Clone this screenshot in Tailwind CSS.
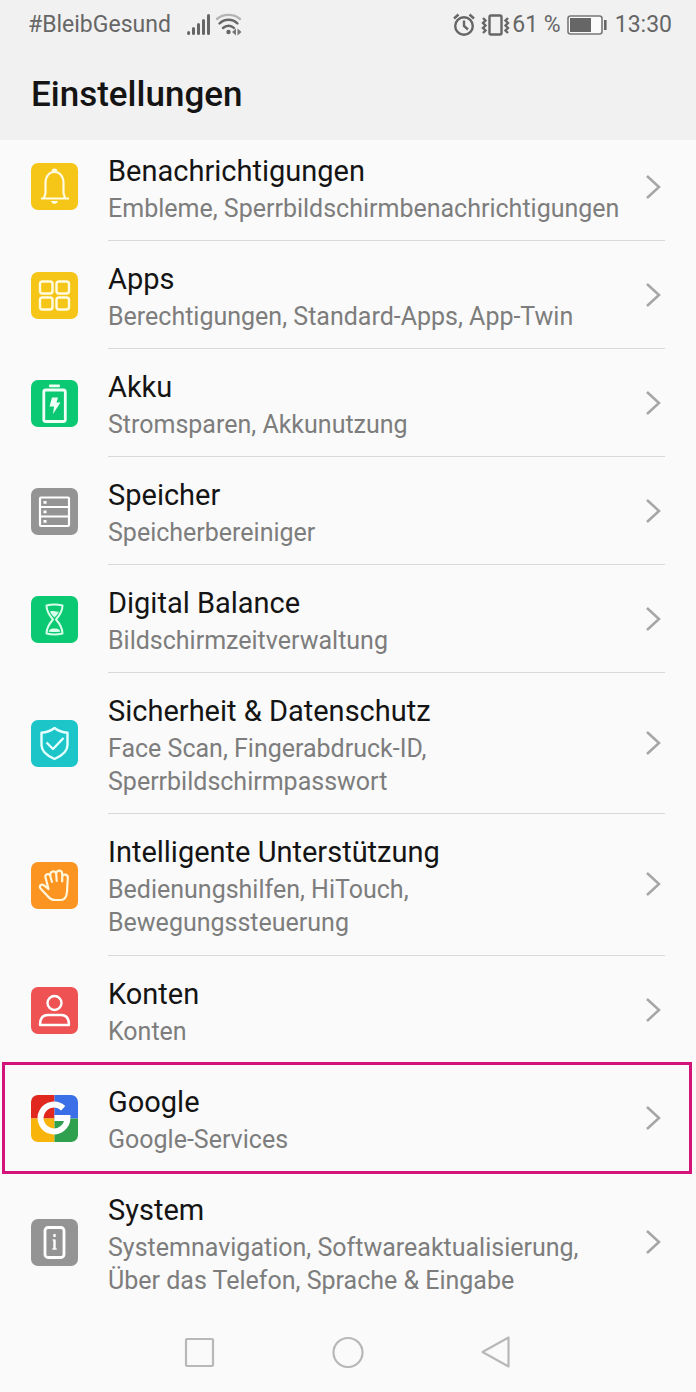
<!DOCTYPE html>
<html lang="de">
  <head>
    <meta charset="UTF-8" />
    <meta name="viewport" content="width=device-width, initial-scale=1.0" />
    <title>Einstellungen</title>
    <script src="https://cdn.jsdelivr.net/npm/@tailwindcss/browser@4"></script>
  </head>
  <body class="flex min-h-screen flex-col bg-[#fafafa] font-['Roboto',sans-serif] text-[#141414]">

    <!-- Status bar + title -->
    <header class="h-[140px] bg-[#f1f1f1]">
      <div class="flex h-[50px] items-center justify-between pr-6 pl-7 text-[23px] text-[#666]">
        <div class="flex items-center">
          <span>#BleibGesund</span>
          <svg class="ml-4 h-6 w-6" viewBox="0 0 24 24" stroke="#666" stroke-width="3" stroke-linecap="round" aria-label="Signal">
            <path d="M1.600 20.500v-1M6.500 20.500v-5M11.500 20.500v-9M16.500 20.500v-13M21.500 20.500v-18" />
          </svg>
          <svg class="ml-1 h-6 w-7" viewBox="0 0 28 24" fill="none" stroke="#666" stroke-width="2.400" stroke-linecap="round" aria-label="WLAN">
            <path d="M2 6c6-5.500 17-5.500 23 0" stroke="#b4b4b4" />
            <path d="M4.500 10.500c5-5 13-5 18 0M8 15c3.300-3 8-3 11 0" />
            <circle cx="13.500" cy="19" r="2.200" fill="#666" stroke="none" />
            <path d="M21 15.500v7l-4-3.500zM22.500 15.500v7l4-3.500z" fill="#777" stroke="none" />
          </svg>
        </div>
        <div class="flex items-center">
          <svg class="h-6 w-6" viewBox="0 0 24 24" fill="none" stroke="#666" stroke-width="2.400" aria-label="Wecker">
            <circle cx="12" cy="13" r="8.800" />
            <path d="M12 7.500V13l4 3.500M2 5.500l4.500-4M22 5.500l-4.500-4" />
          </svg>
          <svg class="ml-1 h-6 w-8" viewBox="0 0 32 24" fill="none" stroke="#666" stroke-width="2.400" aria-label="Vibration">
            <rect x="9.500" y="2.500" width="12" height="19" rx="1.500" />
            <path d="M3 5l2.500 2.500L3 10l2.500 2.500L3 15l2.500 2.500L3 20M28 5l-2.500 2.500L28 10l-2.500 2.500L28 15l-2.500 2.500L28 20" />
          </svg>
          <span>61 %</span>
          <svg class="ml-1.5 h-6 w-10" viewBox="0 0 40 24" aria-label="Akku">
            <rect x="1" y="3" width="34" height="18" rx="2.500" fill="#fafafa" stroke="#777" stroke-width="1.600" />
            <rect x="3" y="5" width="21" height="14" fill="#666" />
            <rect x="37" y="7" width="2.600" height="10" fill="#666" />
          </svg>
          <span class="ml-2">13:30</span>
        </div>
      </div>
      <h1 class="pt-[23px] pl-[31px] text-[35px] leading-[44px] font-medium">Einstellungen</h1>
    </header>

    <!-- Settings list -->
    <main class="flex-1">
      <ul>
        <li>
          <a href="#benachrichtigungen" class="flex items-start pl-[31px]">
            <svg class="mt-[23px] h-[47px] w-[47px] shrink-0" viewBox="0 0 47 47" fill="none" stroke="#fffbe0" stroke-width="2.200">
              <rect width="47" height="47" rx="7" fill="#f5c518" stroke="none" />
              <path d="M10 35.500h28M13 35l1.500-5V20c0-7 4-11 9-11s9 4 9 11v10l1.500 5" />
              <path d="M20.500 8.500a3 3 0 0 1 6 0zM20 38h7c-.5 2-2 2.800-3.500 2.800S20.500 40 20 38z" fill="#fffbe0" stroke="none" />
            </svg>
            <span class="mr-[31px] ml-[30px] flex flex-1 items-center justify-between border-b border-[#d9d9d9] pt-3 pb-[15px]">
              <span>
                <span class="block text-[29px] leading-[38px]">Benachrichtigungen</span>
                <span class="mt-0.5 block text-[25px] leading-[33px] text-[#7d7d7d]">Embleme, Sperrbildschirmbenachrichtigungen</span>
              </span>
              <svg class="mr-1 mb-1 h-6 w-4 shrink-0" viewBox="0 0 16 24" fill="none" stroke="#a6a6a6" stroke-width="2.500"><path d="M2 1l12 11L2 23" /></svg>
            </span>
          </a>
        </li>
        <li>
          <a href="#apps" class="flex items-center pl-[31px]">
            <svg class="h-[47px] w-[47px] shrink-0" viewBox="0 0 47 47" fill="none" stroke="#fffbe0" stroke-width="2.400">
              <rect width="47" height="47" rx="7" fill="#f5c518" stroke="none" />
              <rect x="9" y="9.500" width="12.500" height="12" rx="2.500" />
              <rect x="25.500" y="9.500" width="12.500" height="12" rx="2.500" />
              <rect x="9" y="25.500" width="12.500" height="12" rx="2.500" />
              <rect x="25.500" y="25.500" width="12.500" height="12" rx="2.500" />
            </svg>
            <span class="mr-[31px] ml-[30px] flex flex-1 items-center justify-between border-b border-[#d9d9d9] pt-[19px] pb-[15px]">
              <span>
                <span class="block text-[29px] leading-[38px]">Apps</span>
                <span class="mt-0.5 block text-[25px] leading-[33px] text-[#7d7d7d]">Berechtigungen, Standard-Apps, App-Twin</span>
              </span>
              <svg class="mr-1 mb-1 h-6 w-4 shrink-0" viewBox="0 0 16 24" fill="none" stroke="#a6a6a6" stroke-width="2.500"><path d="M2 1l12 11L2 23" /></svg>
            </span>
          </a>
        </li>
        <li>
          <a href="#akku" class="flex items-center pl-[31px]">
            <svg class="h-[47px] w-[47px] shrink-0" viewBox="0 0 47 47" fill="none" stroke="#f0fff6" stroke-width="2.800">
              <rect width="47" height="47" rx="7" fill="#0bc872" stroke="none" />
              <rect x="18" y="4.500" width="11" height="2.800" rx="1" fill="#f0fff6" stroke="none" />
              <rect x="12.800" y="10" width="21.500" height="31.500" rx="2" />
              <path d="M21 17.500h6l-1.500 5h4L22 34l1-7.500h-4.500z" fill="#f0fff6" stroke="none" />
            </svg>
            <span class="mr-[31px] ml-[30px] flex flex-1 items-center justify-between border-b border-[#d9d9d9] pt-[19px] pb-[15px]">
              <span>
                <span class="block text-[29px] leading-[38px]">Akku</span>
                <span class="mt-0.5 block text-[25px] leading-[33px] text-[#7d7d7d]">Stromsparen, Akkunutzung</span>
              </span>
              <svg class="mr-1 mb-1 h-6 w-4 shrink-0" viewBox="0 0 16 24" fill="none" stroke="#a6a6a6" stroke-width="2.500"><path d="M2 1l12 11L2 23" /></svg>
            </span>
          </a>
        </li>
        <li>
          <a href="#speicher" class="flex items-center pl-[31px]">
            <svg class="h-[47px] w-[47px] shrink-0" viewBox="0 0 47 47" fill="none" stroke="#fff" stroke-width="2.200">
              <rect width="47" height="47" rx="7" fill="#949494" stroke="none" />
              <rect x="9" y="9.500" width="29" height="28.500" rx="1" />
              <path d="M9 19h29M9 28.500h29" />
              <path d="M12.500 14.300h3M12.500 23.800h3M12.500 33.300h3" stroke-width="2.800" />
            </svg>
            <span class="mr-[31px] ml-[30px] flex flex-1 items-center justify-between border-b border-[#d9d9d9] pt-[19px] pb-[15px]">
              <span>
                <span class="block text-[29px] leading-[38px]">Speicher</span>
                <span class="mt-0.5 block text-[25px] leading-[33px] text-[#7d7d7d]">Speicherbereiniger</span>
              </span>
              <svg class="mr-1 mb-1 h-6 w-4 shrink-0" viewBox="0 0 16 24" fill="none" stroke="#a6a6a6" stroke-width="2.500"><path d="M2 1l12 11L2 23" /></svg>
            </span>
          </a>
        </li>
        <li>
          <a href="#digital-balance" class="flex items-center pl-[31px]">
            <svg class="h-[47px] w-[47px] shrink-0" viewBox="0 0 47 47" fill="none" stroke="#d8ffea" stroke-width="2">
              <rect width="47" height="47" rx="7" fill="#0bc872" stroke="none" />
              <path d="M15.500 9.500c5-1.300 11-1.300 16 0 0 6-3 10-6.500 14 3.500 4 6.500 8 6.500 14-5 1.300-11 1.300-16 0 0-6 3-10 6.500-14-3.500-4-6.500-8-6.500-14z" stroke-linejoin="round" />
              <path d="M19 15.500c3-1.500 6 1 9 0-1 2.500-3 4.500-4.500 6-1.500-1.500-3.500-3.500-4.500-6zM17.500 35.500c1-2.500 3.500-3 6-3s5 .5 6 3c-4 .8-8 .8-12 0z" fill="#d8ffea" stroke="none" />
            </svg>
            <span class="mr-[31px] ml-[30px] flex flex-1 items-center justify-between border-b border-[#d9d9d9] pt-[19px] pb-[15px]">
              <span>
                <span class="block text-[29px] leading-[38px]">Digital Balance</span>
                <span class="mt-0.5 block text-[25px] leading-[33px] text-[#7d7d7d]">Bildschirmzeitverwaltung</span>
              </span>
              <svg class="mr-1 mb-1 h-6 w-4 shrink-0" viewBox="0 0 16 24" fill="none" stroke="#a6a6a6" stroke-width="2.500"><path d="M2 1l12 11L2 23" /></svg>
            </span>
          </a>
        </li>
        <li>
          <a href="#sicherheit" class="flex items-center pl-[31px]">
            <svg class="h-[47px] w-[47px] shrink-0" viewBox="0 0 47 47" fill="none" stroke="#e6ffff" stroke-width="2.400" stroke-linejoin="round">
              <rect width="47" height="47" rx="7" fill="#1bc5c8" stroke="none" />
              <path d="M23.500 8c4 3 8 4.300 13 4.700V25c0 6-5 10.500-13 14-8-3.500-13-8-13-14V12.700C15.500 12.300 19.500 11 23.500 8z" />
              <path d="M15.500 22.500l6.500 6.500 10.500-11" />
            </svg>
            <span class="mr-[31px] ml-[30px] flex flex-1 items-center justify-between border-b border-[#d9d9d9] pt-[19px] pb-[15px]">
              <span>
                <span class="block text-[29px] leading-[38px]">Sicherheit &amp; Datenschutz</span>
                <span class="mt-0.5 block text-[25px] leading-[33px] text-[#7d7d7d]">Face Scan, Fingerabdruck-ID,<br />Sperrbildschirmpasswort</span>
              </span>
              <svg class="mr-1 mb-1 h-6 w-4 shrink-0" viewBox="0 0 16 24" fill="none" stroke="#a6a6a6" stroke-width="2.500"><path d="M2 1l12 11L2 23" /></svg>
            </span>
          </a>
        </li>
        <li>
          <a href="#unterstuetzung" class="flex items-center pl-[31px]">
            <svg class="h-[47px] w-[47px] shrink-0" viewBox="0 0 47 47" fill="none" stroke="#fff6dc" stroke-width="2.200" stroke-linecap="round" stroke-linejoin="round">
              <rect width="47" height="47" rx="7" fill="#fb9421" stroke="none" />
              <path d="M17.500 27L14.500 15.500c-1-3.500 3.500-4.500 4.800-1.500l1.700 6M19.400 14c-1-5 5-6.500 5.800-2l.5 7M25.200 12c0-4.500 6-4.400 6 0v7.500M31.200 15c.6-3.600 6-3 5.600 1L36 30c-.5 5-3 8-6 8h-6c-3 0-5-1-7-3.500L9.500 26.500c-1.800-2.800 1-5 3.500-3.200l4.500 3.700" />
            </svg>
            <span class="mr-[31px] ml-[30px] flex flex-1 items-center justify-between border-b border-[#d9d9d9] pt-[19px] pb-4">
              <span>
                <span class="block text-[29px] leading-[38px]">Intelligente Unterstützung</span>
                <span class="mt-0.5 block text-[25px] leading-[33px] text-[#7d7d7d]">Bedienungshilfen, HiTouch,<br />Bewegungssteuerung</span>
              </span>
              <svg class="mr-1 mb-1 h-6 w-4 shrink-0" viewBox="0 0 16 24" fill="none" stroke="#a6a6a6" stroke-width="2.500"><path d="M2 1l12 11L2 23" /></svg>
            </span>
          </a>
        </li>
        <li>
          <a href="#konten" class="flex items-center pl-[31px]">
            <svg class="h-[47px] w-[47px] shrink-0" viewBox="0 0 47 47" fill="none" stroke="#fff" stroke-width="2.400" stroke-linejoin="round">
              <rect width="47" height="47" rx="7" fill="#ee5253" stroke="none" />
              <circle cx="23.500" cy="16" r="7" />
              <path d="M9 38c0-6.500 3-10 8-10h13c5 0 8 3.500 8 10z" />
            </svg>
            <span class="mr-[31px] ml-[30px] flex flex-1 items-center justify-between border-b border-transparent pt-[19px] pb-[15px]">
              <span>
                <span class="block text-[29px] leading-[38px]">Konten</span>
                <span class="mt-0.5 block text-[25px] leading-[33px] text-[#7d7d7d]">Konten</span>
              </span>
              <svg class="mr-1 mb-1 h-6 w-4 shrink-0" viewBox="0 0 16 24" fill="none" stroke="#a6a6a6" stroke-width="2.500"><path d="M2 1l12 11L2 23" /></svg>
            </span>
          </a>
        </li>
        <!-- highlighted entry -->
        <li class="relative">
          <a href="#google" class="flex items-center pl-[31px]">
            <svg class="h-[47px] w-[47px] shrink-0 rounded-[7px]" viewBox="0 0 47 47" fill="none">
              <path d="M0 0h23.500v23.500H0z" fill="#e0281f" />
              <path d="M23.500 0H47v23.500H23.500z" fill="#3b6fe8" />
              <path d="M0 23.500h23.500V47H0z" fill="#f8b40a" />
              <path d="M23.500 23.500H47V47H23.500z" fill="#2fa04e" />
              <path d="M32.200 13.200A13.400 13.400 0 1 0 36.400 23H23.500" stroke="#fff" stroke-width="6" />
            </svg>
            <span class="mr-[31px] ml-[30px] flex flex-1 items-center justify-between border-b border-transparent pt-[19px] pb-[15px]">
              <span>
                <span class="block text-[29px] leading-[38px]">Google</span>
                <span class="mt-0.5 block text-[25px] leading-[33px] text-[#7d7d7d]">Google-Services</span>
              </span>
              <svg class="mr-1 mb-1 h-6 w-4 shrink-0" viewBox="0 0 16 24" fill="none" stroke="#a6a6a6" stroke-width="2.500"><path d="M2 1l12 11L2 23" /></svg>
            </span>
          </a>
          <div class="pointer-events-none absolute -top-0.5 right-1 -bottom-0.5 left-0.5 border-3 border-[#d4137a]"></div>
        </li>
        <li>
          <a href="#system" class="flex items-center pl-[31px]">
            <svg class="h-[47px] w-[47px] shrink-0" viewBox="0 0 47 47" fill="none" stroke="#fff" stroke-width="2.800">
              <rect width="47" height="47" rx="7" fill="#949494" stroke="none" />
              <rect x="14" y="8.500" width="19" height="30" rx="3" />
              <path d="M23.500 15v3M23.500 20.500v10" stroke-width="2.400" />
              <path d="M21.500 21h2M21 30h5" stroke-width="1.200" />
            </svg>
            <span class="mr-[31px] ml-[30px] flex flex-1 items-center justify-between pt-[19px] pb-[15px]">
              <span>
                <span class="block text-[29px] leading-[38px]">System</span>
                <span class="mt-0.5 block text-[25px] leading-[33px] text-[#7d7d7d]">Systemnavigation, Softwareaktualisierung,<br />Über das Telefon, Sprache &amp; Eingabe</span>
              </span>
              <svg class="mr-1 mb-1 h-6 w-4 shrink-0" viewBox="0 0 16 24" fill="none" stroke="#a6a6a6" stroke-width="2.500"><path d="M2 1l12 11L2 23" /></svg>
            </span>
          </a>
        </li>
      </ul>
    </main>

    <!-- Navigation keys -->
    <nav class="flex h-20 items-center justify-center gap-[116px]">
      <button type="button" aria-label="Letzte Apps">
        <svg class="h-8 w-8" viewBox="0 0 32 32" fill="none" stroke="#b8b8b8" stroke-width="2.200"><rect x="2" y="3" width="27" height="27" rx="1" /></svg>
      </button>
      <button type="button" aria-label="Startseite">
        <svg class="h-8 w-8" viewBox="0 0 32 32" fill="none" stroke="#b8b8b8" stroke-width="2.200"><circle cx="16" cy="16.500" r="14.500" /></svg>
      </button>
      <button type="button" aria-label="Zurück">
        <svg class="h-8 w-8" viewBox="0 0 32 32" fill="none" stroke="#b8b8b8" stroke-width="2.200" stroke-linejoin="round"><path d="M28.500 1.500v29L2.500 16z" /></svg>
      </button>
    </nav>
  </body>
</html>
